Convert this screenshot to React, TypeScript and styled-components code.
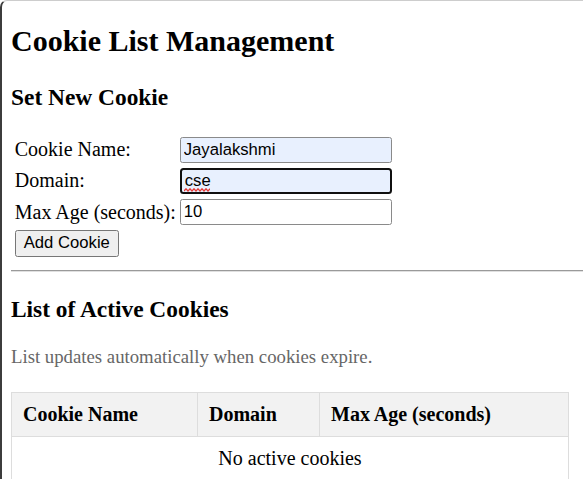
import React from "react";
import styled, { createGlobalStyle } from "styled-components";

const GlobalStyle = createGlobalStyle`
  html, body {
    margin: 0;
    padding: 0;
    background: #ffffff;
    overflow: hidden;
  }
  body {
    font-family: "Liberation Serif", "Times New Roman", serif;
    color: #000000;
  }
`;

const Frame = styled.div`
  box-sizing: border-box;
  min-height: 100vh;
  width: 100%;
  border-top: 1px solid #cdcdcd;
  border-left: 2px solid #3c3c3c;
  border-top-left-radius: 7px;
  overflow: hidden;
`;

const Page = styled.main`
  padding: 0 0 0 9px;
  font-size: 20px;
`;

const Title = styled.h1`
  font-size: 30px;
  font-weight: bold;
  margin: 22.5px 0 26.5px;
`;

const SectionTitle = styled.h2<{ $after?: number }>`
  font-size: 23.4px;
  font-weight: bold;
  margin: 23.4px 0 ${(p) => p.$after ?? 23.4}px;
`;

const FormGrid = styled.form`
  display: grid;
  grid-template-columns: 160.5px 212px;
  grid-auto-rows: 26.25px;
  gap: 5px;
  padding: 3.75px;
  width: max-content;
`;

const FieldLabel = styled.label`
  align-self: center;
  font-size: 20px;
  line-height: 23px;
  white-space: nowrap;
`;

const InputWrap = styled.div`
  position: relative;
  display: flex;
`;

const TextInput = styled.input<{ $autofill?: boolean; $focused?: boolean }>`
  box-sizing: border-box;
  width: 212px;
  height: 26.25px;
  margin: 0;
  padding: 1.25px 2.5px;
  font-family: "Liberation Sans", Arial, sans-serif;
  font-size: 16.67px;
  color: #000000;
  background: ${(p) => (p.$autofill ? "#e8f0fe" : "#ffffff")};
  border: ${(p) => (p.$focused ? "2px solid #101010" : "1.25px solid #8a8a8a")};
  border-radius: ${(p) => (p.$focused ? "3.5px" : "2.5px")};
  outline: none;
`;

const Squiggle = styled.svg`
  position: absolute;
  left: 4px;
  top: 20.5px;
  pointer-events: none;
`;

const ActionCell = styled.div`
  grid-column: 1 / span 2;
  display: flex;
  align-items: stretch;
`;

const Button = styled.button`
  box-sizing: border-box;
  height: 26.25px;
  margin: 0;
  padding: 1.25px 8px;
  font-family: "Liberation Sans", Arial, sans-serif;
  font-size: 16.67px;
  color: #000000;
  background: #efefef;
  border: 1.25px solid #767676;
  border-radius: 2.5px;
`;

const Rule = styled.hr`
  margin: 10px 0;
  border: none;
  border-top: 1px solid #9a9a9a;
  border-bottom: 1px solid #e0e0e0;
  height: 0;
`;

const Note = styled.p`
  font-size: 18.75px;
  color: #666666;
  margin: 21.5px 0 24px;
`;

const CookieTable = styled.table`
  width: 557px;
  border-collapse: collapse;
  table-layout: fixed;
  font-size: 20px;
`;

const HeadCell = styled.th<{ $width: number }>`
  width: ${(p) => p.$width}px;
  box-sizing: border-box;
  text-align: left;
  font-weight: bold;
  background: #f2f2f2;
  border: 1px solid #dddddd;
  padding: 10px 11px;
  line-height: 23px;
`;

const EmptyCell = styled.td`
  text-align: center;
  border: 1px solid #dddddd;
  padding: 10px 11px;
  line-height: 23px;
`;

function SpellMark({ width }: { width: number }) {
  const pts: string[] = [];
  for (let x = 0, i = 0; x <= width; x += 2, i++) {
    pts.push(`${x},${i % 2 === 0 ? 3 : 0.75}`);
  }
  return (
    <Squiggle width={width} height={4} viewBox={`0 0 ${width} 4`}>
      <polyline points={pts.join(" ")} fill="none" stroke="#e53935" strokeWidth={1.2} />
    </Squiggle>
  );
}

export default function App() {
  return (
    <>
      <GlobalStyle />
      <Frame>
        <Page>
          <Title>Cookie List Management</Title>
          <SectionTitle $after={21.8}>Set New Cookie</SectionTitle>
          <FormGrid onSubmit={(e) => e.preventDefault()}>
            <FieldLabel htmlFor="cookie-name">Cookie Name:</FieldLabel>
            <TextInput id="cookie-name" defaultValue="Jayalakshmi" $autofill />
            <FieldLabel htmlFor="cookie-domain">Domain:</FieldLabel>
            <InputWrap>
              <TextInput id="cookie-domain" defaultValue="cse" $autofill $focused spellCheck={false} />
              <SpellMark width={26} />
            </InputWrap>
            <FieldLabel htmlFor="cookie-age">Max Age (seconds):</FieldLabel>
            <TextInput id="cookie-age" defaultValue="10" />
            <ActionCell>
              <Button type="submit">Add Cookie</Button>
            </ActionCell>
          </FormGrid>
          <Rule />
          <SectionTitle>List of Active Cookies</SectionTitle>
          <Note>List updates automatically when cookies expire.</Note>
          <CookieTable>
            <thead>
              <tr>
                <HeadCell $width={186}>Cookie Name</HeadCell>
                <HeadCell $width={122}>Domain</HeadCell>
                <HeadCell $width={249}>Max Age (seconds)</HeadCell>
              </tr>
            </thead>
            <tbody>
              <tr>
                <EmptyCell colSpan={3}>No active cookies</EmptyCell>
              </tr>
            </tbody>
          </CookieTable>
        </Page>
      </Frame>
    </>
  );
}
